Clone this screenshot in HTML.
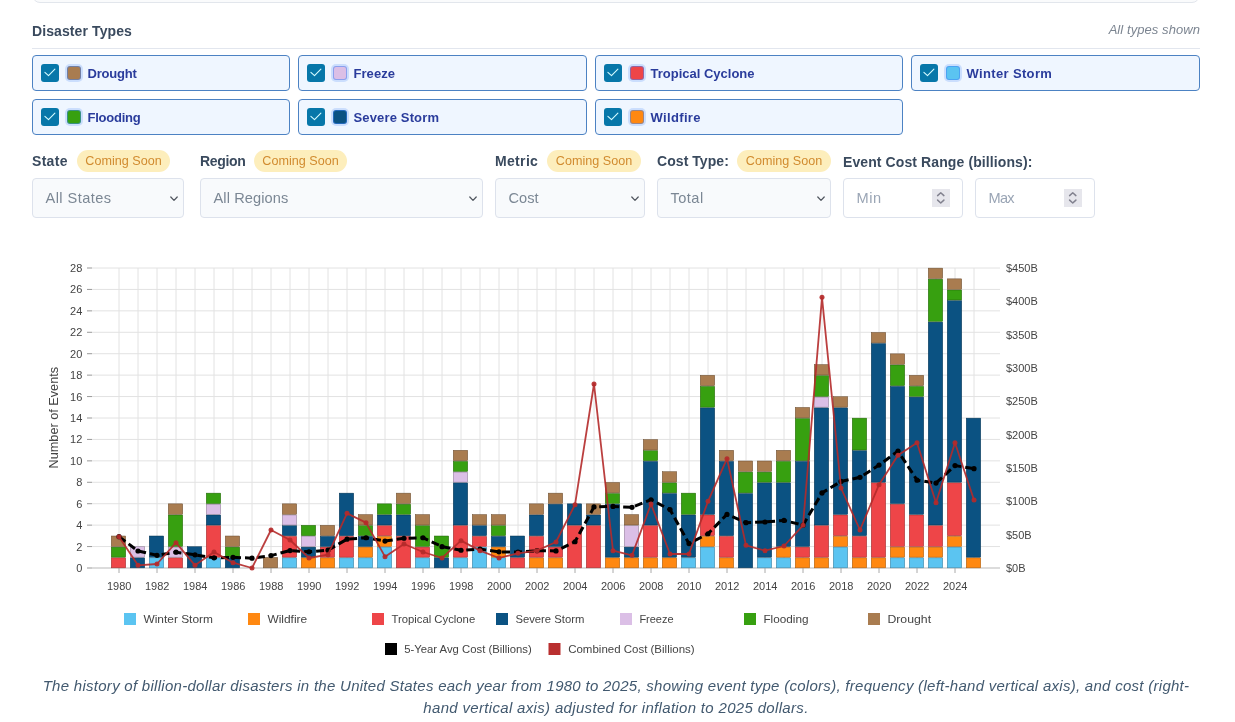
<!DOCTYPE html>
<html lang="en"><head><meta charset="utf-8"><title>Billion-Dollar Disasters</title>
<style>
html,body{margin:0;padding:0;background:#fff;}
body{will-change:transform;width:1235px;height:722px;position:relative;overflow:hidden;font-family:"Liberation Sans",sans-serif;}
.abs{position:absolute;white-space:nowrap;}
.topbox{position:absolute;left:32px;top:-30px;width:1166px;height:31px;border:1px solid #e2e6ec;border-radius:8px;background:#fafbfc;}
.h{left:32px;top:21.5px;font-weight:bold;font-size:14px;line-height:18px;color:#3a4a5e;letter-spacing:.1px;}
.note{right:35px;top:22px;font-style:italic;font-size:13px;line-height:16px;color:#7c8591;letter-spacing:.07px;}
.hr{position:absolute;left:32px;top:48px;width:1168px;height:1px;background:#e2e6ee;}
.ck{position:absolute;height:34px;border:1px solid #4c82c3;border-radius:4px;background:#eff6ff;box-sizing:content-box;}
.ck{box-sizing:border-box;height:36px;}
.box{position:absolute;left:8px;top:8px;width:18px;height:18px;border-radius:3px;background:#0777a9;}
.box svg{display:block}
.sw{position:absolute;left:34px;top:10px;width:12px;height:12px;border:1px solid rgba(59,130,246,.5);background-clip:border-box;border-radius:3px;box-shadow:0 0 0 2px rgba(59,130,246,.2);}
.lb{position:absolute;left:54.5px;top:10px;font-weight:bold;font-size:13px;line-height:16px;color:#2a3c9c;white-space:nowrap;}
.fl{font-weight:bold;font-size:14px;line-height:18px;color:#3a4a5e;}
.badge{height:22px;border-radius:11px;background:#fdeebc;color:#d18b2f;font-size:12.6px;line-height:22px;text-align:center;width:93px;}
.sel{position:absolute;top:178px;height:40px;box-sizing:border-box;border:1px solid #dde2ec;border-radius:4px;background:#f8fafc;color:#7b8794;font-size:14.6px;line-height:39px;padding-left:12.5px;white-space:nowrap;}
.inp{background:#fff;color:#9aa5b5;}
.chev{position:absolute;right:5.3px;top:16.7px;}
.spin{position:absolute;right:12.5px;top:10px;width:18px;height:18px;background:#e6e6ec;}
.spin svg{display:block}
.chart{position:absolute;left:0;top:0;}
.cap{position:absolute;left:32px;width:1168px;text-align:center;font-style:italic;font-size:15px;line-height:22px;color:#42596f;white-space:nowrap;}
</style></head><body>
<div class="topbox"></div>
<div class="abs h">Disaster Types</div>
<div class="abs note">All types shown</div>
<div class="hr"></div>
<div class="ck" style="left:32px;top:55px;width:258px"><span class="box"><svg width="18" height="18" viewBox="0 0 18 18"><path d="M3.9 8.3 L7.5 11.7 L13.9 5.2" fill="none" stroke="#d4fbff" stroke-width="1.1" stroke-linecap="round" stroke-linejoin="round"/></svg></span><span class="sw" style="background:#a97c50"></span><span class="lb" style="letter-spacing:-0.22px">Drought</span></div>
<div class="ck" style="left:298px;top:55px;width:289px"><span class="box"><svg width="18" height="18" viewBox="0 0 18 18"><path d="M3.9 8.3 L7.5 11.7 L13.9 5.2" fill="none" stroke="#d4fbff" stroke-width="1.1" stroke-linecap="round" stroke-linejoin="round"/></svg></span><span class="sw" style="background:#dbbfe6"></span><span class="lb" style="letter-spacing:0.05px">Freeze</span></div>
<div class="ck" style="left:595px;top:55px;width:308px"><span class="box"><svg width="18" height="18" viewBox="0 0 18 18"><path d="M3.9 8.3 L7.5 11.7 L13.9 5.2" fill="none" stroke="#d4fbff" stroke-width="1.1" stroke-linecap="round" stroke-linejoin="round"/></svg></span><span class="sw" style="background:#ee4548"></span><span class="lb" style="letter-spacing:0px">Tropical Cyclone</span></div>
<div class="ck" style="left:911px;top:55px;width:289px"><span class="box"><svg width="18" height="18" viewBox="0 0 18 18"><path d="M3.9 8.3 L7.5 11.7 L13.9 5.2" fill="none" stroke="#d4fbff" stroke-width="1.1" stroke-linecap="round" stroke-linejoin="round"/></svg></span><span class="sw" style="background:#5bc4f1"></span><span class="lb" style="letter-spacing:0.35px">Winter Storm</span></div>
<div class="ck" style="left:32px;top:99px;width:258px"><span class="box"><svg width="18" height="18" viewBox="0 0 18 18"><path d="M3.9 8.3 L7.5 11.7 L13.9 5.2" fill="none" stroke="#d4fbff" stroke-width="1.1" stroke-linecap="round" stroke-linejoin="round"/></svg></span><span class="sw" style="background:#37a010"></span><span class="lb" style="letter-spacing:-0.23px">Flooding</span></div>
<div class="ck" style="left:298px;top:99px;width:289px"><span class="box"><svg width="18" height="18" viewBox="0 0 18 18"><path d="M3.9 8.3 L7.5 11.7 L13.9 5.2" fill="none" stroke="#d4fbff" stroke-width="1.1" stroke-linecap="round" stroke-linejoin="round"/></svg></span><span class="sw" style="background:#0b5282"></span><span class="lb" style="letter-spacing:0.15px">Severe Storm</span></div>
<div class="ck" style="left:595px;top:99px;width:308px"><span class="box"><svg width="18" height="18" viewBox="0 0 18 18"><path d="M3.9 8.3 L7.5 11.7 L13.9 5.2" fill="none" stroke="#d4fbff" stroke-width="1.1" stroke-linecap="round" stroke-linejoin="round"/></svg></span><span class="sw" style="background:#ff8811"></span><span class="lb" style="letter-spacing:0.35px">Wildfire</span></div>
<div class="abs fl" style="left:32px;top:151.5px;letter-spacing:.31px">State</div><div class="abs badge" style="left:77px;top:150px">Coming Soon</div>
<div class="abs fl" style="left:200px;top:151.5px;letter-spacing:-.34px">Region</div><div class="abs badge" style="left:254px;top:150px">Coming Soon</div>
<div class="abs fl" style="left:495px;top:151.5px;letter-spacing:.33px">Metric</div><div class="abs badge" style="left:547px;top:150px;width:94px">Coming Soon</div>
<div class="abs fl" style="left:657px;top:151.5px;letter-spacing:.06px">Cost Type:</div><div class="abs badge" style="left:737px;top:150px;width:94px">Coming Soon</div>
<div class="abs fl" style="left:843px;top:153px;letter-spacing:.1px">Event Cost Range (billions):</div>
<div class="sel" style="left:32px;width:152px;letter-spacing:.44px">All States<svg class="chev" width="8" height="6" viewBox="0 0 8 6"><path d="M0.8 1.0 L4 4.4 L7.2 1.0" fill="none" stroke="#50565f" stroke-width="1.25" stroke-linecap="round" stroke-linejoin="round"/></svg></div>
<div class="sel" style="left:200px;width:283px;letter-spacing:.1px">All Regions<svg class="chev" width="8" height="6" viewBox="0 0 8 6"><path d="M0.8 1.0 L4 4.4 L7.2 1.0" fill="none" stroke="#50565f" stroke-width="1.25" stroke-linecap="round" stroke-linejoin="round"/></svg></div>
<div class="sel" style="left:495px;width:150px;letter-spacing:.05px">Cost<svg class="chev" width="8" height="6" viewBox="0 0 8 6"><path d="M0.8 1.0 L4 4.4 L7.2 1.0" fill="none" stroke="#50565f" stroke-width="1.25" stroke-linecap="round" stroke-linejoin="round"/></svg></div>
<div class="sel" style="left:657px;width:174px;letter-spacing:.45px">Total<svg class="chev" width="8" height="6" viewBox="0 0 8 6"><path d="M0.8 1.0 L4 4.4 L7.2 1.0" fill="none" stroke="#50565f" stroke-width="1.25" stroke-linecap="round" stroke-linejoin="round"/></svg></div>
<div class="sel inp" style="left:843px;width:120px;letter-spacing:.5px">Min<span class="spin"><svg width="18" height="18" viewBox="0 0 18 18"><path d="M5.6 6.6 L8.75 3.7 L11.9 6.6 M5.6 11.1 L8.75 14.0 L11.9 11.1" fill="none" stroke="#82828f" stroke-width="1.5" stroke-linecap="round" stroke-linejoin="round"/></svg></span></div>
<div class="sel inp" style="left:975px;width:120px;letter-spacing:-.7px">Max<span class="spin"><svg width="18" height="18" viewBox="0 0 18 18"><path d="M5.6 6.6 L8.75 3.7 L11.9 6.6 M5.6 11.1 L8.75 14.0 L11.9 11.1" fill="none" stroke="#82828f" stroke-width="1.5" stroke-linecap="round" stroke-linejoin="round"/></svg></span></div>
<svg class="chart" width="1235" height="722" viewBox="0 0 1235 722">
<g stroke="#e2e2e2" stroke-width="1" shape-rendering="auto">
<line x1="119.00" x2="119.00" y1="268" y2="568"/>
<line x1="138.00" x2="138.00" y1="268" y2="568"/>
<line x1="157.00" x2="157.00" y1="268" y2="568"/>
<line x1="176.00" x2="176.00" y1="268" y2="568"/>
<line x1="195.00" x2="195.00" y1="268" y2="568"/>
<line x1="214.00" x2="214.00" y1="268" y2="568"/>
<line x1="233.00" x2="233.00" y1="268" y2="568"/>
<line x1="252.00" x2="252.00" y1="268" y2="568"/>
<line x1="271.00" x2="271.00" y1="268" y2="568"/>
<line x1="290.00" x2="290.00" y1="268" y2="568"/>
<line x1="309.00" x2="309.00" y1="268" y2="568"/>
<line x1="328.00" x2="328.00" y1="268" y2="568"/>
<line x1="347.00" x2="347.00" y1="268" y2="568"/>
<line x1="366.00" x2="366.00" y1="268" y2="568"/>
<line x1="385.00" x2="385.00" y1="268" y2="568"/>
<line x1="404.00" x2="404.00" y1="268" y2="568"/>
<line x1="423.00" x2="423.00" y1="268" y2="568"/>
<line x1="442.00" x2="442.00" y1="268" y2="568"/>
<line x1="461.00" x2="461.00" y1="268" y2="568"/>
<line x1="480.00" x2="480.00" y1="268" y2="568"/>
<line x1="499.00" x2="499.00" y1="268" y2="568"/>
<line x1="518.00" x2="518.00" y1="268" y2="568"/>
<line x1="537.00" x2="537.00" y1="268" y2="568"/>
<line x1="556.00" x2="556.00" y1="268" y2="568"/>
<line x1="575.00" x2="575.00" y1="268" y2="568"/>
<line x1="594.00" x2="594.00" y1="268" y2="568"/>
<line x1="613.00" x2="613.00" y1="268" y2="568"/>
<line x1="632.00" x2="632.00" y1="268" y2="568"/>
<line x1="651.00" x2="651.00" y1="268" y2="568"/>
<line x1="670.00" x2="670.00" y1="268" y2="568"/>
<line x1="689.00" x2="689.00" y1="268" y2="568"/>
<line x1="708.00" x2="708.00" y1="268" y2="568"/>
<line x1="727.00" x2="727.00" y1="268" y2="568"/>
<line x1="746.00" x2="746.00" y1="268" y2="568"/>
<line x1="765.00" x2="765.00" y1="268" y2="568"/>
<line x1="784.00" x2="784.00" y1="268" y2="568"/>
<line x1="803.00" x2="803.00" y1="268" y2="568"/>
<line x1="822.00" x2="822.00" y1="268" y2="568"/>
<line x1="841.00" x2="841.00" y1="268" y2="568"/>
<line x1="860.00" x2="860.00" y1="268" y2="568"/>
<line x1="879.00" x2="879.00" y1="268" y2="568"/>
<line x1="898.00" x2="898.00" y1="268" y2="568"/>
<line x1="917.00" x2="917.00" y1="268" y2="568"/>
<line x1="936.00" x2="936.00" y1="268" y2="568"/>
<line x1="955.00" x2="955.00" y1="268" y2="568"/>
<line x1="974.00" x2="974.00" y1="268" y2="568"/>
<line x1="92" x2="1000" y1="546.57" y2="546.57"/>
<line x1="92" x2="1000" y1="525.14" y2="525.14"/>
<line x1="92" x2="1000" y1="503.71" y2="503.71"/>
<line x1="92" x2="1000" y1="482.29" y2="482.29"/>
<line x1="92" x2="1000" y1="460.86" y2="460.86"/>
<line x1="92" x2="1000" y1="439.43" y2="439.43"/>
<line x1="92" x2="1000" y1="418.00" y2="418.00"/>
<line x1="92" x2="1000" y1="396.57" y2="396.57"/>
<line x1="92" x2="1000" y1="375.14" y2="375.14"/>
<line x1="92" x2="1000" y1="353.71" y2="353.71"/>
<line x1="92" x2="1000" y1="332.29" y2="332.29"/>
<line x1="92" x2="1000" y1="310.86" y2="310.86"/>
<line x1="92" x2="1000" y1="289.43" y2="289.43"/>
<line x1="92" x2="1000" y1="268.00" y2="268.00"/>
</g>
<line x1="92" x2="1000" y1="568" y2="568" stroke="#dcdcdc" stroke-width="2"/>
<g stroke="#999" stroke-width="1">
<line x1="87" x2="92" y1="568.00" y2="568.00"/>
<line x1="87" x2="92" y1="546.57" y2="546.57"/>
<line x1="87" x2="92" y1="525.14" y2="525.14"/>
<line x1="87" x2="92" y1="503.71" y2="503.71"/>
<line x1="87" x2="92" y1="482.29" y2="482.29"/>
<line x1="87" x2="92" y1="460.86" y2="460.86"/>
<line x1="87" x2="92" y1="439.43" y2="439.43"/>
<line x1="87" x2="92" y1="418.00" y2="418.00"/>
<line x1="87" x2="92" y1="396.57" y2="396.57"/>
<line x1="87" x2="92" y1="375.14" y2="375.14"/>
<line x1="87" x2="92" y1="353.71" y2="353.71"/>
<line x1="87" x2="92" y1="332.29" y2="332.29"/>
<line x1="87" x2="92" y1="310.86" y2="310.86"/>
<line x1="87" x2="92" y1="289.43" y2="289.43"/>
<line x1="87" x2="92" y1="268.00" y2="268.00"/>
</g><g stroke="#aaa" stroke-width="1">
<line x1="119.00" x2="119.00" y1="568" y2="573"/>
<line x1="157.00" x2="157.00" y1="568" y2="573"/>
<line x1="195.00" x2="195.00" y1="568" y2="573"/>
<line x1="233.00" x2="233.00" y1="568" y2="573"/>
<line x1="271.00" x2="271.00" y1="568" y2="573"/>
<line x1="309.00" x2="309.00" y1="568" y2="573"/>
<line x1="347.00" x2="347.00" y1="568" y2="573"/>
<line x1="385.00" x2="385.00" y1="568" y2="573"/>
<line x1="423.00" x2="423.00" y1="568" y2="573"/>
<line x1="461.00" x2="461.00" y1="568" y2="573"/>
<line x1="499.00" x2="499.00" y1="568" y2="573"/>
<line x1="537.00" x2="537.00" y1="568" y2="573"/>
<line x1="575.00" x2="575.00" y1="568" y2="573"/>
<line x1="613.00" x2="613.00" y1="568" y2="573"/>
<line x1="651.00" x2="651.00" y1="568" y2="573"/>
<line x1="689.00" x2="689.00" y1="568" y2="573"/>
<line x1="727.00" x2="727.00" y1="568" y2="573"/>
<line x1="765.00" x2="765.00" y1="568" y2="573"/>
<line x1="803.00" x2="803.00" y1="568" y2="573"/>
<line x1="841.00" x2="841.00" y1="568" y2="573"/>
<line x1="879.00" x2="879.00" y1="568" y2="573"/>
<line x1="917.00" x2="917.00" y1="568" y2="573"/>
<line x1="955.00" x2="955.00" y1="568" y2="573"/>
</g>
<g stroke-width=".5">
<rect x="111.25" y="557.84" width="14.45" height="10.01" fill="#ee4548" stroke="#932a2c"/>
<rect x="111.25" y="547.12" width="14.45" height="10.01" fill="#37a010" stroke="#226309"/>
<rect x="111.25" y="536.01" width="14.45" height="10.41" fill="#a97c50" stroke="#684c31"/>
<rect x="130.25" y="557.84" width="14.45" height="10.01" fill="#0b5282" stroke="#063250"/>
<rect x="130.25" y="546.72" width="14.45" height="10.41" fill="#dbbfe6" stroke="#87768e"/>
<rect x="149.25" y="557.84" width="14.45" height="10.01" fill="#5bc4f1" stroke="#387995"/>
<rect x="149.25" y="536.01" width="14.45" height="21.13" fill="#0b5282" stroke="#063250"/>
<rect x="168.25" y="557.84" width="14.45" height="10.01" fill="#ee4548" stroke="#932a2c"/>
<rect x="168.25" y="547.12" width="14.45" height="10.01" fill="#dbbfe6" stroke="#87768e"/>
<rect x="168.25" y="514.98" width="14.45" height="31.44" fill="#37a010" stroke="#226309"/>
<rect x="168.25" y="503.86" width="14.45" height="10.41" fill="#a97c50" stroke="#684c31"/>
<rect x="187.25" y="546.72" width="14.45" height="21.13" fill="#0b5282" stroke="#063250"/>
<rect x="206.25" y="557.84" width="14.45" height="10.01" fill="#5bc4f1" stroke="#387995"/>
<rect x="206.25" y="525.69" width="14.45" height="31.44" fill="#ee4548" stroke="#932a2c"/>
<rect x="206.25" y="514.98" width="14.45" height="10.01" fill="#0b5282" stroke="#063250"/>
<rect x="206.25" y="504.26" width="14.45" height="10.01" fill="#dbbfe6" stroke="#87768e"/>
<rect x="206.25" y="493.15" width="14.45" height="10.41" fill="#37a010" stroke="#226309"/>
<rect x="225.25" y="557.84" width="14.45" height="10.01" fill="#0b5282" stroke="#063250"/>
<rect x="225.25" y="547.12" width="14.45" height="10.01" fill="#37a010" stroke="#226309"/>
<rect x="225.25" y="536.01" width="14.45" height="10.41" fill="#a97c50" stroke="#684c31"/>
<rect x="263.25" y="557.44" width="14.45" height="10.41" fill="#a97c50" stroke="#684c31"/>
<rect x="282.25" y="557.84" width="14.45" height="10.01" fill="#5bc4f1" stroke="#387995"/>
<rect x="282.25" y="536.41" width="14.45" height="20.73" fill="#ee4548" stroke="#932a2c"/>
<rect x="282.25" y="525.69" width="14.45" height="10.01" fill="#0b5282" stroke="#063250"/>
<rect x="282.25" y="514.98" width="14.45" height="10.01" fill="#dbbfe6" stroke="#87768e"/>
<rect x="282.25" y="503.86" width="14.45" height="10.41" fill="#a97c50" stroke="#684c31"/>
<rect x="301.25" y="557.84" width="14.45" height="10.01" fill="#ff8811" stroke="#9e540a"/>
<rect x="301.25" y="547.12" width="14.45" height="10.01" fill="#0b5282" stroke="#063250"/>
<rect x="301.25" y="536.41" width="14.45" height="10.01" fill="#dbbfe6" stroke="#87768e"/>
<rect x="301.25" y="525.29" width="14.45" height="10.41" fill="#37a010" stroke="#226309"/>
<rect x="320.25" y="557.84" width="14.45" height="10.01" fill="#ff8811" stroke="#9e540a"/>
<rect x="320.25" y="547.12" width="14.45" height="10.01" fill="#ee4548" stroke="#932a2c"/>
<rect x="320.25" y="536.41" width="14.45" height="10.01" fill="#0b5282" stroke="#063250"/>
<rect x="320.25" y="525.29" width="14.45" height="10.41" fill="#a97c50" stroke="#684c31"/>
<rect x="339.25" y="557.84" width="14.45" height="10.01" fill="#5bc4f1" stroke="#387995"/>
<rect x="339.25" y="536.41" width="14.45" height="20.73" fill="#ee4548" stroke="#932a2c"/>
<rect x="339.25" y="493.15" width="14.45" height="42.56" fill="#0b5282" stroke="#063250"/>
<rect x="358.25" y="557.84" width="14.45" height="10.01" fill="#5bc4f1" stroke="#387995"/>
<rect x="358.25" y="547.12" width="14.45" height="10.01" fill="#ff8811" stroke="#9e540a"/>
<rect x="358.25" y="536.41" width="14.45" height="10.01" fill="#0b5282" stroke="#063250"/>
<rect x="358.25" y="525.69" width="14.45" height="10.01" fill="#37a010" stroke="#226309"/>
<rect x="358.25" y="514.58" width="14.45" height="10.41" fill="#a97c50" stroke="#684c31"/>
<rect x="377.25" y="547.12" width="14.45" height="20.73" fill="#5bc4f1" stroke="#387995"/>
<rect x="377.25" y="536.41" width="14.45" height="10.01" fill="#ff8811" stroke="#9e540a"/>
<rect x="377.25" y="525.69" width="14.45" height="10.01" fill="#ee4548" stroke="#932a2c"/>
<rect x="377.25" y="514.98" width="14.45" height="10.01" fill="#0b5282" stroke="#063250"/>
<rect x="377.25" y="503.86" width="14.45" height="10.41" fill="#37a010" stroke="#226309"/>
<rect x="396.25" y="536.41" width="14.45" height="31.44" fill="#ee4548" stroke="#932a2c"/>
<rect x="396.25" y="514.98" width="14.45" height="20.73" fill="#0b5282" stroke="#063250"/>
<rect x="396.25" y="504.26" width="14.45" height="10.01" fill="#37a010" stroke="#226309"/>
<rect x="396.25" y="493.15" width="14.45" height="10.41" fill="#a97c50" stroke="#684c31"/>
<rect x="415.25" y="557.84" width="14.45" height="10.01" fill="#5bc4f1" stroke="#387995"/>
<rect x="415.25" y="547.12" width="14.45" height="10.01" fill="#ee4548" stroke="#932a2c"/>
<rect x="415.25" y="525.69" width="14.45" height="20.73" fill="#37a010" stroke="#226309"/>
<rect x="415.25" y="514.58" width="14.45" height="10.41" fill="#a97c50" stroke="#684c31"/>
<rect x="434.25" y="557.84" width="14.45" height="10.01" fill="#0b5282" stroke="#063250"/>
<rect x="434.25" y="536.01" width="14.45" height="21.13" fill="#37a010" stroke="#226309"/>
<rect x="453.25" y="557.84" width="14.45" height="10.01" fill="#5bc4f1" stroke="#387995"/>
<rect x="453.25" y="525.69" width="14.45" height="31.44" fill="#ee4548" stroke="#932a2c"/>
<rect x="453.25" y="482.84" width="14.45" height="42.16" fill="#0b5282" stroke="#063250"/>
<rect x="453.25" y="472.12" width="14.45" height="10.01" fill="#dbbfe6" stroke="#87768e"/>
<rect x="453.25" y="461.41" width="14.45" height="10.01" fill="#37a010" stroke="#226309"/>
<rect x="453.25" y="450.29" width="14.45" height="10.41" fill="#a97c50" stroke="#684c31"/>
<rect x="472.25" y="547.12" width="14.45" height="20.73" fill="#5bc4f1" stroke="#387995"/>
<rect x="472.25" y="536.41" width="14.45" height="10.01" fill="#ee4548" stroke="#932a2c"/>
<rect x="472.25" y="525.69" width="14.45" height="10.01" fill="#0b5282" stroke="#063250"/>
<rect x="472.25" y="514.58" width="14.45" height="10.41" fill="#a97c50" stroke="#684c31"/>
<rect x="491.25" y="557.84" width="14.45" height="10.01" fill="#5bc4f1" stroke="#387995"/>
<rect x="491.25" y="547.12" width="14.45" height="10.01" fill="#ff8811" stroke="#9e540a"/>
<rect x="491.25" y="536.41" width="14.45" height="10.01" fill="#0b5282" stroke="#063250"/>
<rect x="491.25" y="525.69" width="14.45" height="10.01" fill="#37a010" stroke="#226309"/>
<rect x="491.25" y="514.58" width="14.45" height="10.41" fill="#a97c50" stroke="#684c31"/>
<rect x="510.25" y="557.84" width="14.45" height="10.01" fill="#ee4548" stroke="#932a2c"/>
<rect x="510.25" y="536.01" width="14.45" height="21.13" fill="#0b5282" stroke="#063250"/>
<rect x="529.25" y="557.84" width="14.45" height="10.01" fill="#ff8811" stroke="#9e540a"/>
<rect x="529.25" y="536.41" width="14.45" height="20.73" fill="#ee4548" stroke="#932a2c"/>
<rect x="529.25" y="514.98" width="14.45" height="20.73" fill="#0b5282" stroke="#063250"/>
<rect x="529.25" y="503.86" width="14.45" height="10.41" fill="#a97c50" stroke="#684c31"/>
<rect x="548.25" y="557.84" width="14.45" height="10.01" fill="#ff8811" stroke="#9e540a"/>
<rect x="548.25" y="547.12" width="14.45" height="10.01" fill="#ee4548" stroke="#932a2c"/>
<rect x="548.25" y="504.26" width="14.45" height="42.16" fill="#0b5282" stroke="#063250"/>
<rect x="548.25" y="493.15" width="14.45" height="10.41" fill="#a97c50" stroke="#684c31"/>
<rect x="567.25" y="525.69" width="14.45" height="42.16" fill="#ee4548" stroke="#932a2c"/>
<rect x="567.25" y="503.86" width="14.45" height="21.13" fill="#0b5282" stroke="#063250"/>
<rect x="586.25" y="525.69" width="14.45" height="42.16" fill="#ee4548" stroke="#932a2c"/>
<rect x="586.25" y="514.98" width="14.45" height="10.01" fill="#0b5282" stroke="#063250"/>
<rect x="586.25" y="503.86" width="14.45" height="10.41" fill="#a97c50" stroke="#684c31"/>
<rect x="605.25" y="557.84" width="14.45" height="10.01" fill="#ff8811" stroke="#9e540a"/>
<rect x="605.25" y="504.26" width="14.45" height="52.87" fill="#0b5282" stroke="#063250"/>
<rect x="605.25" y="493.55" width="14.45" height="10.01" fill="#37a010" stroke="#226309"/>
<rect x="605.25" y="482.44" width="14.45" height="10.41" fill="#a97c50" stroke="#684c31"/>
<rect x="624.25" y="557.84" width="14.45" height="10.01" fill="#ff8811" stroke="#9e540a"/>
<rect x="624.25" y="547.12" width="14.45" height="10.01" fill="#0b5282" stroke="#063250"/>
<rect x="624.25" y="525.69" width="14.45" height="20.73" fill="#dbbfe6" stroke="#87768e"/>
<rect x="624.25" y="514.58" width="14.45" height="10.41" fill="#a97c50" stroke="#684c31"/>
<rect x="643.25" y="557.84" width="14.45" height="10.01" fill="#ff8811" stroke="#9e540a"/>
<rect x="643.25" y="525.69" width="14.45" height="31.44" fill="#ee4548" stroke="#932a2c"/>
<rect x="643.25" y="461.41" width="14.45" height="63.59" fill="#0b5282" stroke="#063250"/>
<rect x="643.25" y="450.69" width="14.45" height="10.01" fill="#37a010" stroke="#226309"/>
<rect x="643.25" y="439.58" width="14.45" height="10.41" fill="#a97c50" stroke="#684c31"/>
<rect x="662.25" y="557.84" width="14.45" height="10.01" fill="#ff8811" stroke="#9e540a"/>
<rect x="662.25" y="493.55" width="14.45" height="63.59" fill="#0b5282" stroke="#063250"/>
<rect x="662.25" y="482.84" width="14.45" height="10.01" fill="#37a010" stroke="#226309"/>
<rect x="662.25" y="471.72" width="14.45" height="10.41" fill="#a97c50" stroke="#684c31"/>
<rect x="681.25" y="557.84" width="14.45" height="10.01" fill="#5bc4f1" stroke="#387995"/>
<rect x="681.25" y="514.98" width="14.45" height="42.16" fill="#0b5282" stroke="#063250"/>
<rect x="681.25" y="493.15" width="14.45" height="21.13" fill="#37a010" stroke="#226309"/>
<rect x="700.25" y="547.12" width="14.45" height="20.73" fill="#5bc4f1" stroke="#387995"/>
<rect x="700.25" y="536.41" width="14.45" height="10.01" fill="#ff8811" stroke="#9e540a"/>
<rect x="700.25" y="514.98" width="14.45" height="20.73" fill="#ee4548" stroke="#932a2c"/>
<rect x="700.25" y="407.84" width="14.45" height="106.44" fill="#0b5282" stroke="#063250"/>
<rect x="700.25" y="386.41" width="14.45" height="20.73" fill="#37a010" stroke="#226309"/>
<rect x="700.25" y="375.29" width="14.45" height="10.41" fill="#a97c50" stroke="#684c31"/>
<rect x="719.25" y="557.84" width="14.45" height="10.01" fill="#ff8811" stroke="#9e540a"/>
<rect x="719.25" y="536.41" width="14.45" height="20.73" fill="#ee4548" stroke="#932a2c"/>
<rect x="719.25" y="461.41" width="14.45" height="74.30" fill="#0b5282" stroke="#063250"/>
<rect x="719.25" y="450.29" width="14.45" height="10.41" fill="#a97c50" stroke="#684c31"/>
<rect x="738.25" y="493.55" width="14.45" height="74.30" fill="#0b5282" stroke="#063250"/>
<rect x="738.25" y="472.12" width="14.45" height="20.73" fill="#37a010" stroke="#226309"/>
<rect x="738.25" y="461.01" width="14.45" height="10.41" fill="#a97c50" stroke="#684c31"/>
<rect x="757.25" y="557.84" width="14.45" height="10.01" fill="#5bc4f1" stroke="#387995"/>
<rect x="757.25" y="482.84" width="14.45" height="74.30" fill="#0b5282" stroke="#063250"/>
<rect x="757.25" y="472.12" width="14.45" height="10.01" fill="#37a010" stroke="#226309"/>
<rect x="757.25" y="461.01" width="14.45" height="10.41" fill="#a97c50" stroke="#684c31"/>
<rect x="776.25" y="557.84" width="14.45" height="10.01" fill="#5bc4f1" stroke="#387995"/>
<rect x="776.25" y="547.12" width="14.45" height="10.01" fill="#ff8811" stroke="#9e540a"/>
<rect x="776.25" y="482.84" width="14.45" height="63.59" fill="#0b5282" stroke="#063250"/>
<rect x="776.25" y="461.41" width="14.45" height="20.73" fill="#37a010" stroke="#226309"/>
<rect x="776.25" y="450.29" width="14.45" height="10.41" fill="#a97c50" stroke="#684c31"/>
<rect x="795.25" y="557.84" width="14.45" height="10.01" fill="#ff8811" stroke="#9e540a"/>
<rect x="795.25" y="547.12" width="14.45" height="10.01" fill="#ee4548" stroke="#932a2c"/>
<rect x="795.25" y="461.41" width="14.45" height="85.01" fill="#0b5282" stroke="#063250"/>
<rect x="795.25" y="418.55" width="14.45" height="42.16" fill="#37a010" stroke="#226309"/>
<rect x="795.25" y="407.44" width="14.45" height="10.41" fill="#a97c50" stroke="#684c31"/>
<rect x="814.25" y="557.84" width="14.45" height="10.01" fill="#ff8811" stroke="#9e540a"/>
<rect x="814.25" y="525.69" width="14.45" height="31.44" fill="#ee4548" stroke="#932a2c"/>
<rect x="814.25" y="407.84" width="14.45" height="117.16" fill="#0b5282" stroke="#063250"/>
<rect x="814.25" y="397.12" width="14.45" height="10.01" fill="#dbbfe6" stroke="#87768e"/>
<rect x="814.25" y="375.69" width="14.45" height="20.73" fill="#37a010" stroke="#226309"/>
<rect x="814.25" y="364.58" width="14.45" height="10.41" fill="#a97c50" stroke="#684c31"/>
<rect x="833.25" y="547.12" width="14.45" height="20.73" fill="#5bc4f1" stroke="#387995"/>
<rect x="833.25" y="536.41" width="14.45" height="10.01" fill="#ff8811" stroke="#9e540a"/>
<rect x="833.25" y="514.98" width="14.45" height="20.73" fill="#ee4548" stroke="#932a2c"/>
<rect x="833.25" y="407.84" width="14.45" height="106.44" fill="#0b5282" stroke="#063250"/>
<rect x="833.25" y="396.72" width="14.45" height="10.41" fill="#a97c50" stroke="#684c31"/>
<rect x="852.25" y="557.84" width="14.45" height="10.01" fill="#ff8811" stroke="#9e540a"/>
<rect x="852.25" y="536.41" width="14.45" height="20.73" fill="#ee4548" stroke="#932a2c"/>
<rect x="852.25" y="450.69" width="14.45" height="85.01" fill="#0b5282" stroke="#063250"/>
<rect x="852.25" y="418.15" width="14.45" height="31.84" fill="#37a010" stroke="#226309"/>
<rect x="871.25" y="557.84" width="14.45" height="10.01" fill="#ff8811" stroke="#9e540a"/>
<rect x="871.25" y="482.84" width="14.45" height="74.30" fill="#ee4548" stroke="#932a2c"/>
<rect x="871.25" y="343.55" width="14.45" height="138.59" fill="#0b5282" stroke="#063250"/>
<rect x="871.25" y="332.44" width="14.45" height="10.41" fill="#a97c50" stroke="#684c31"/>
<rect x="890.25" y="557.84" width="14.45" height="10.01" fill="#5bc4f1" stroke="#387995"/>
<rect x="890.25" y="547.12" width="14.45" height="10.01" fill="#ff8811" stroke="#9e540a"/>
<rect x="890.25" y="504.26" width="14.45" height="42.16" fill="#ee4548" stroke="#932a2c"/>
<rect x="890.25" y="386.41" width="14.45" height="117.16" fill="#0b5282" stroke="#063250"/>
<rect x="890.25" y="364.98" width="14.45" height="20.73" fill="#37a010" stroke="#226309"/>
<rect x="890.25" y="353.86" width="14.45" height="10.41" fill="#a97c50" stroke="#684c31"/>
<rect x="909.25" y="557.84" width="14.45" height="10.01" fill="#5bc4f1" stroke="#387995"/>
<rect x="909.25" y="547.12" width="14.45" height="10.01" fill="#ff8811" stroke="#9e540a"/>
<rect x="909.25" y="514.98" width="14.45" height="31.44" fill="#ee4548" stroke="#932a2c"/>
<rect x="909.25" y="397.12" width="14.45" height="117.16" fill="#0b5282" stroke="#063250"/>
<rect x="909.25" y="386.41" width="14.45" height="10.01" fill="#37a010" stroke="#226309"/>
<rect x="909.25" y="375.29" width="14.45" height="10.41" fill="#a97c50" stroke="#684c31"/>
<rect x="928.25" y="557.84" width="14.45" height="10.01" fill="#5bc4f1" stroke="#387995"/>
<rect x="928.25" y="547.12" width="14.45" height="10.01" fill="#ff8811" stroke="#9e540a"/>
<rect x="928.25" y="525.69" width="14.45" height="20.73" fill="#ee4548" stroke="#932a2c"/>
<rect x="928.25" y="322.12" width="14.45" height="202.87" fill="#0b5282" stroke="#063250"/>
<rect x="928.25" y="279.26" width="14.45" height="42.16" fill="#37a010" stroke="#226309"/>
<rect x="928.25" y="268.15" width="14.45" height="10.41" fill="#a97c50" stroke="#684c31"/>
<rect x="947.25" y="547.12" width="14.45" height="20.73" fill="#5bc4f1" stroke="#387995"/>
<rect x="947.25" y="536.41" width="14.45" height="10.01" fill="#ff8811" stroke="#9e540a"/>
<rect x="947.25" y="482.84" width="14.45" height="52.87" fill="#ee4548" stroke="#932a2c"/>
<rect x="947.25" y="300.69" width="14.45" height="181.44" fill="#0b5282" stroke="#063250"/>
<rect x="947.25" y="289.98" width="14.45" height="10.01" fill="#37a010" stroke="#226309"/>
<rect x="947.25" y="278.86" width="14.45" height="10.41" fill="#a97c50" stroke="#684c31"/>
<rect x="966.25" y="557.84" width="14.45" height="10.01" fill="#ff8811" stroke="#9e540a"/>
<rect x="966.25" y="418.15" width="14.45" height="138.99" fill="#0b5282" stroke="#063250"/>
</g>
<polyline points="119.00,536.67 138.00,551.00 157.00,555.33 176.00,552.17 195.00,554.80 214.00,557.87 233.00,557.33 252.00,558.13 271.00,555.60 290.00,550.53 309.00,551.73 328.00,550.13 347.00,539.20 366.00,537.73 385.00,541.07 404.00,538.27 423.00,537.73 442.00,546.67 461.00,550.27 480.00,549.07 499.00,551.87 518.00,552.13 537.00,550.67 556.00,550.93 575.00,541.73 594.00,506.93 613.00,506.40 632.00,507.33 651.00,499.73 670.00,509.60 689.00,543.60 708.00,533.73 727.00,514.40 746.00,522.67 765.00,522.00 784.00,520.40 803.00,525.20 822.00,492.93 841.00,481.47 860.00,477.33 879.00,465.07 898.00,451.07 917.00,480.13 936.00,483.07 955.00,465.60 974.00,468.67" fill="none" stroke="#000" stroke-width="3" stroke-dasharray="8 4"/>
<g fill="#000">
<circle cx="119.00" cy="536.67" r="2.6"/>
<circle cx="138.00" cy="551.00" r="2.6"/>
<circle cx="157.00" cy="555.33" r="2.6"/>
<circle cx="176.00" cy="552.17" r="2.6"/>
<circle cx="195.00" cy="554.80" r="2.6"/>
<circle cx="214.00" cy="557.87" r="2.6"/>
<circle cx="233.00" cy="557.33" r="2.6"/>
<circle cx="252.00" cy="558.13" r="2.6"/>
<circle cx="271.00" cy="555.60" r="2.6"/>
<circle cx="290.00" cy="550.53" r="2.6"/>
<circle cx="309.00" cy="551.73" r="2.6"/>
<circle cx="328.00" cy="550.13" r="2.6"/>
<circle cx="347.00" cy="539.20" r="2.6"/>
<circle cx="366.00" cy="537.73" r="2.6"/>
<circle cx="385.00" cy="541.07" r="2.6"/>
<circle cx="404.00" cy="538.27" r="2.6"/>
<circle cx="423.00" cy="537.73" r="2.6"/>
<circle cx="442.00" cy="546.67" r="2.6"/>
<circle cx="461.00" cy="550.27" r="2.6"/>
<circle cx="480.00" cy="549.07" r="2.6"/>
<circle cx="499.00" cy="551.87" r="2.6"/>
<circle cx="518.00" cy="552.13" r="2.6"/>
<circle cx="537.00" cy="550.67" r="2.6"/>
<circle cx="556.00" cy="550.93" r="2.6"/>
<circle cx="575.00" cy="541.73" r="2.6"/>
<circle cx="594.00" cy="506.93" r="2.6"/>
<circle cx="613.00" cy="506.40" r="2.6"/>
<circle cx="632.00" cy="507.33" r="2.6"/>
<circle cx="651.00" cy="499.73" r="2.6"/>
<circle cx="670.00" cy="509.60" r="2.6"/>
<circle cx="689.00" cy="543.60" r="2.6"/>
<circle cx="708.00" cy="533.73" r="2.6"/>
<circle cx="727.00" cy="514.40" r="2.6"/>
<circle cx="746.00" cy="522.67" r="2.6"/>
<circle cx="765.00" cy="522.00" r="2.6"/>
<circle cx="784.00" cy="520.40" r="2.6"/>
<circle cx="803.00" cy="525.20" r="2.6"/>
<circle cx="822.00" cy="492.93" r="2.6"/>
<circle cx="841.00" cy="481.47" r="2.6"/>
<circle cx="860.00" cy="477.33" r="2.6"/>
<circle cx="879.00" cy="465.07" r="2.6"/>
<circle cx="898.00" cy="451.07" r="2.6"/>
<circle cx="917.00" cy="480.13" r="2.6"/>
<circle cx="936.00" cy="483.07" r="2.6"/>
<circle cx="955.00" cy="465.60" r="2.6"/>
<circle cx="974.00" cy="468.67" r="2.6"/>
</g>
<polyline points="119.00,536.67 138.00,565.33 157.00,564.00 176.00,542.67 195.00,565.33 214.00,552.00 233.00,562.67 252.00,568.00 271.00,530.00 290.00,540.00 309.00,558.00 328.00,554.67 347.00,513.33 366.00,522.67 385.00,556.67 404.00,544.00 423.00,552.00 442.00,558.00 461.00,540.67 480.00,550.67 499.00,558.00 518.00,553.33 537.00,550.67 556.00,542.00 575.00,504.67 594.00,384.00 613.00,550.67 632.00,555.33 651.00,504.00 670.00,554.00 689.00,554.00 708.00,501.33 727.00,458.67 746.00,545.33 765.00,550.67 784.00,546.00 803.00,525.33 822.00,297.33 841.00,488.00 860.00,530.00 879.00,484.67 898.00,455.33 917.00,442.67 936.00,502.67 955.00,442.67 974.00,500.00" fill="none" stroke="#b42a2a" stroke-opacity=".9" stroke-width="1.8" stroke-linejoin="round"/>
<g fill="#b42a2a" fill-opacity=".92">
<circle cx="119.00" cy="536.67" r="2.5"/>
<circle cx="138.00" cy="565.33" r="2.5"/>
<circle cx="157.00" cy="564.00" r="2.5"/>
<circle cx="176.00" cy="542.67" r="2.5"/>
<circle cx="195.00" cy="565.33" r="2.5"/>
<circle cx="214.00" cy="552.00" r="2.5"/>
<circle cx="233.00" cy="562.67" r="2.5"/>
<circle cx="252.00" cy="568.00" r="2.5"/>
<circle cx="271.00" cy="530.00" r="2.5"/>
<circle cx="290.00" cy="540.00" r="2.5"/>
<circle cx="309.00" cy="558.00" r="2.5"/>
<circle cx="328.00" cy="554.67" r="2.5"/>
<circle cx="347.00" cy="513.33" r="2.5"/>
<circle cx="366.00" cy="522.67" r="2.5"/>
<circle cx="385.00" cy="556.67" r="2.5"/>
<circle cx="404.00" cy="544.00" r="2.5"/>
<circle cx="423.00" cy="552.00" r="2.5"/>
<circle cx="442.00" cy="558.00" r="2.5"/>
<circle cx="461.00" cy="540.67" r="2.5"/>
<circle cx="480.00" cy="550.67" r="2.5"/>
<circle cx="499.00" cy="558.00" r="2.5"/>
<circle cx="518.00" cy="553.33" r="2.5"/>
<circle cx="537.00" cy="550.67" r="2.5"/>
<circle cx="556.00" cy="542.00" r="2.5"/>
<circle cx="575.00" cy="504.67" r="2.5"/>
<circle cx="594.00" cy="384.00" r="2.5"/>
<circle cx="613.00" cy="550.67" r="2.5"/>
<circle cx="632.00" cy="555.33" r="2.5"/>
<circle cx="651.00" cy="504.00" r="2.5"/>
<circle cx="670.00" cy="554.00" r="2.5"/>
<circle cx="689.00" cy="554.00" r="2.5"/>
<circle cx="708.00" cy="501.33" r="2.5"/>
<circle cx="727.00" cy="458.67" r="2.5"/>
<circle cx="746.00" cy="545.33" r="2.5"/>
<circle cx="765.00" cy="550.67" r="2.5"/>
<circle cx="784.00" cy="546.00" r="2.5"/>
<circle cx="803.00" cy="525.33" r="2.5"/>
<circle cx="822.00" cy="297.33" r="2.5"/>
<circle cx="841.00" cy="488.00" r="2.5"/>
<circle cx="860.00" cy="530.00" r="2.5"/>
<circle cx="879.00" cy="484.67" r="2.5"/>
<circle cx="898.00" cy="455.33" r="2.5"/>
<circle cx="917.00" cy="442.67" r="2.5"/>
<circle cx="936.00" cy="502.67" r="2.5"/>
<circle cx="955.00" cy="442.67" r="2.5"/>
<circle cx="974.00" cy="500.00" r="2.5"/>
</g>
<g font-family="'Liberation Sans', sans-serif" font-size="11" fill="#444">
<g text-anchor="end">
<text x="82.3" y="571.95">0</text>
<text x="82.3" y="550.52">2</text>
<text x="82.3" y="529.09">4</text>
<text x="82.3" y="507.66">6</text>
<text x="82.3" y="486.24">8</text>
<text x="82.3" y="464.81">10</text>
<text x="82.3" y="443.38">12</text>
<text x="82.3" y="421.95">14</text>
<text x="82.3" y="400.52">16</text>
<text x="82.3" y="379.09">18</text>
<text x="82.3" y="357.66">20</text>
<text x="82.3" y="336.24">22</text>
<text x="82.3" y="314.81">24</text>
<text x="82.3" y="293.38">26</text>
<text x="82.3" y="271.95">28</text>
</g><g text-anchor="middle">
<text x="119.20" y="589.8">1980</text>
<text x="157.20" y="589.8">1982</text>
<text x="195.20" y="589.8">1984</text>
<text x="233.20" y="589.8">1986</text>
<text x="271.20" y="589.8">1988</text>
<text x="309.20" y="589.8">1990</text>
<text x="347.20" y="589.8">1992</text>
<text x="385.20" y="589.8">1994</text>
<text x="423.20" y="589.8">1996</text>
<text x="461.20" y="589.8">1998</text>
<text x="499.20" y="589.8">2000</text>
<text x="537.20" y="589.8">2002</text>
<text x="575.20" y="589.8">2004</text>
<text x="613.20" y="589.8">2006</text>
<text x="651.20" y="589.8">2008</text>
<text x="689.20" y="589.8">2010</text>
<text x="727.20" y="589.8">2012</text>
<text x="765.20" y="589.8">2014</text>
<text x="803.20" y="589.8">2016</text>
<text x="841.20" y="589.8">2018</text>
<text x="879.20" y="589.8">2020</text>
<text x="917.20" y="589.8">2022</text>
<text x="955.20" y="589.8">2024</text>
</g><g text-anchor="start">
<text x="1006" y="571.95">$0B</text>
<text x="1006" y="538.62">$50B</text>
<text x="1006" y="505.28">$100B</text>
<text x="1006" y="471.95">$150B</text>
<text x="1006" y="438.62">$200B</text>
<text x="1006" y="405.28">$250B</text>
<text x="1006" y="371.95">$300B</text>
<text x="1006" y="338.62">$350B</text>
<text x="1006" y="305.28">$400B</text>
<text x="1006" y="271.95">$450B</text>
</g>
<text font-size="13" text-anchor="middle" textLength="101.5" lengthAdjust="spacingAndGlyphs" transform="translate(57.5,417.7) rotate(-90)">Number of Events</text>
<rect x="124" y="613" width="12" height="12" fill="#5bc4f1"/>
<text x="143.4" y="622.8" textLength="69.6" lengthAdjust="spacingAndGlyphs">Winter Storm</text>
<rect x="248" y="613" width="12" height="12" fill="#ff8811"/>
<text x="267.4" y="622.8" textLength="39.8" lengthAdjust="spacingAndGlyphs">Wildfire</text>
<rect x="372" y="613" width="12" height="12" fill="#ee4548"/>
<text x="391.4" y="622.8" textLength="83.8" lengthAdjust="spacingAndGlyphs">Tropical Cyclone</text>
<rect x="496" y="613" width="12" height="12" fill="#0b5282"/>
<text x="515.4" y="622.8" textLength="69.0" lengthAdjust="spacingAndGlyphs">Severe Storm</text>
<rect x="620" y="613" width="12" height="12" fill="#dbbfe6"/>
<text x="639.4" y="622.8" textLength="34.2" lengthAdjust="spacingAndGlyphs">Freeze</text>
<rect x="744" y="613" width="12" height="12" fill="#37a010"/>
<text x="763.4" y="622.8" textLength="45.1" lengthAdjust="spacingAndGlyphs">Flooding</text>
<rect x="868" y="613" width="12" height="12" fill="#a97c50"/>
<text x="887.4" y="622.8" textLength="43.7" lengthAdjust="spacingAndGlyphs">Drought</text>
<rect x="385" y="643" width="12" height="12" fill="#000"/><text x="404.2" y="652.8" textLength="127.6" lengthAdjust="spacingAndGlyphs">5-Year Avg Cost (Billions)</text>
<rect x="548.5" y="643" width="12" height="12" fill="#b92f2f"/><text x="568.2" y="652.8" textLength="126.4" lengthAdjust="spacingAndGlyphs">Combined Cost (Billions)</text>
</g>
</svg>
<div class="cap" style="top:674.5px;letter-spacing:.278px" id="c1">The history of billion-dollar disasters in the United States each year from 1980 to 2025, showing event type (colors), frequency (left-hand vertical axis), and cost (right-</div>
<div class="cap" style="top:696.5px;letter-spacing:.327px" id="c2">hand vertical axis) adjusted for inflation to 2025 dollars.</div>
</body></html>
